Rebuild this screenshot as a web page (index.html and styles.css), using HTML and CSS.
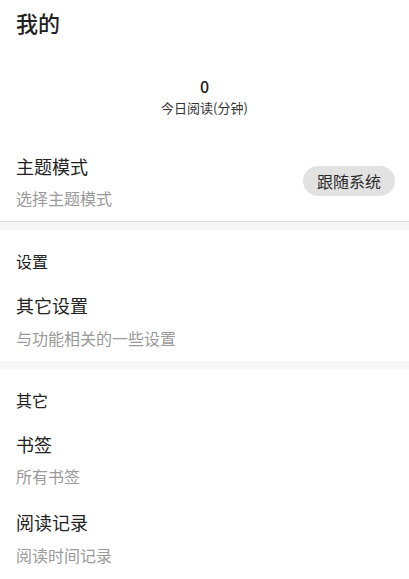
FILE: index.html
```html
<!DOCTYPE html>
<html lang="zh-CN">
<head>
<meta charset="utf-8">
<title>我的</title>
<link rel="stylesheet" href="styles.css">
</head>
<body>
<div class="page">
  <header class="page-title">我的</header>

  <section class="stats">
    <div class="stat-value">0</div>
    <div class="stat-label">今日阅读(分钟)</div>
  </section>

  <div class="item item-theme">
    <div class="item-text">
      <div class="item-title">主题模式</div>
      <div class="item-sub">选择主题模式</div>
    </div>
    <span class="pill">跟随系统</span>
  </div>

  <div class="band"></div>

  <div class="section-head">设置</div>
  <div class="item">
    <div class="item-text">
      <div class="item-title">其它设置</div>
      <div class="item-sub">与功能相关的一些设置</div>
    </div>
  </div>

  <div class="band band-plain"></div>

  <div class="section-head">其它</div>
  <div class="item">
    <div class="item-text">
      <div class="item-title">书签</div>
      <div class="item-sub">所有书签</div>
    </div>
  </div>
  <div class="item">
    <div class="item-text">
      <div class="item-title">阅读记录</div>
      <div class="item-sub">阅读时间记录</div>
    </div>
  </div>
</div>
</body>
</html>
```

FILE: styles.css
```css
* {
  box-sizing: border-box;
}

html, body {
  margin: 0;
  padding: 0;
  background: #ffffff;
}

body {
  font-family: "Noto Sans CJK SC", "Noto Sans", sans-serif;
  color: #222222;
  width: 409px;
  height: 579px;
  overflow: hidden;
}

.page-title {
  font-size: 22px;
  font-weight: 500;
  line-height: 44px;
  height: 44px;
  padding: 0 16px;
  color: #222222;
}

.stats {
  margin-top: 32px;
  padding-bottom: 25.5px;
  display: flex;
  flex-direction: column;
  align-items: center;
}

.stat-value {
  font-size: 16px;
  font-weight: 500;
  line-height: 20px;
  color: #222222;
}

.stat-label {
  margin-top: 3px;
  font-size: 13px;
  line-height: 18px;
  color: #333333;
}

.item {
  display: flex;
  align-items: center;
  justify-content: space-between;
  padding: 11px 14px 12px 16px;
}

.item-theme {
  border-bottom: 1px solid #dedede;
}

.item-title {
  font-size: 18px;
  line-height: 24px;
  color: #222222;
}

.item-sub {
  margin-top: 9.5px;
  font-size: 16px;
  line-height: 22px;
  color: #9a9a9a;
}

.pill {
  display: inline-block;
  height: 30px;
  line-height: 30px;
  padding: 0 14px;
  border-radius: 15px;
  background: #e2e2e2;
  font-size: 16px;
  color: #2a2a2a;
}

.band {
  height: 8px;
  background: #f6f6f6;
}

.section-head {
  padding: 20px 16px 10px;
  font-size: 16px;
  line-height: 22px;
  color: #222222;
}
```
